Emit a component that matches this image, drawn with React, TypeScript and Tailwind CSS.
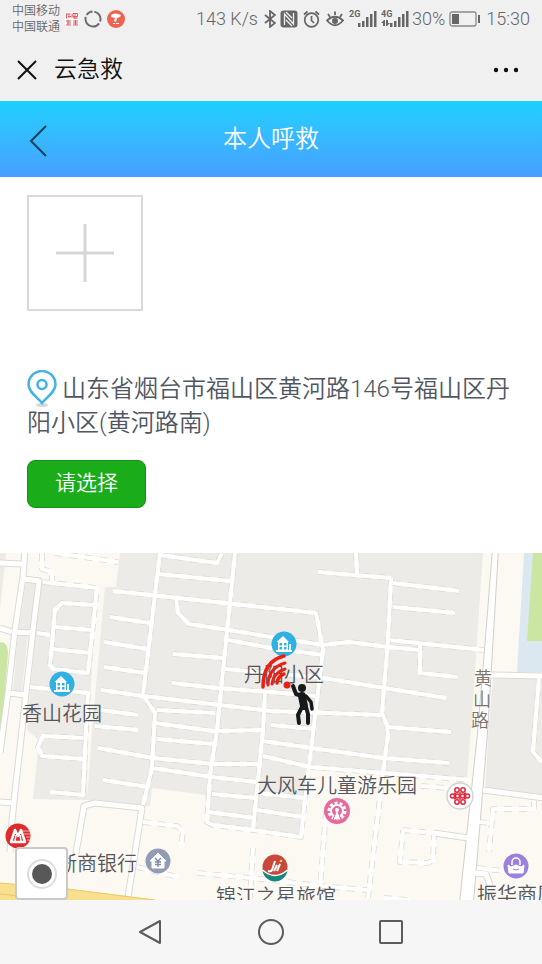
import type { ReactNode } from "react";

const blocks = [
  "0,0 6,0 0,57",
  "42,30 97,35 88,177 87,247 33,246 39,187 27,177 30,140 36,80 28,80 22,138 13,138 18,80 26,30",
  "120,0 211,0 483,0 471,177 467,225 383,221 310,217 301,285 271,280 207,271 205,242 152,235 150,253 87,247 92,177 105,34 116,34",
  "493,124 542,125 542,242 485,237 489,172",
];

// small lanes, drawn white over a dashed edge
const lanes = [
  "160,0 143,142 155,160 154,177 152,215 143,252",
  "235,0 217,177 210,222 207,269 213,272 253,277 301,284 304,255 314,172 323,97 316,60 271,55 113,38",
  "265,140 263,177 253,277",
  "391,25 388,87 382,160 387,172 388,182 383,219 368,345",
  "318,19 391,25",
  "356,0 357,21",
  "393,30 459,38",
  "393,54 455,60",
  "389,87 484,97",
  "176,45 178,60 189,71 229,77 271,84 323,92 349,89 388,94 419,97",
  "420,90 420,120 457,124",
  "228,87 271,95 323,102",
  "173,101 223,105",
  "172,130 217,135 271,139 316,143",
  "225,116 271,120 323,125 446,145",
  "160,2 217,10 222,0",
  "158,21 230,28",
  "110,64 150,70",
  "104,89 148,96",
  "104,114 145,120",
  "101,137 143,143 271,158 382,162",
  "100,157 138,162",
  "95,173 138,177",
  "157,157 215,160",
  "155,170 213,178 263,177",
  "271,172 314,176",
  "157,186 213,191",
  "98,195 153,205 213,211 262,211",
  "152,215 212,224 257,229",
  "103,227 148,234",
  "212,241 257,245",
  "208,259 255,265",
  "263,203 310,214 471,227",
  "263,188 311,195 383,205 449,210",
  "388,174 451,179",
  "257,257 303,264",
  "257,240 305,245",
  "95,52 62,50 55,57 50,112 53,116 88,120 97,35 43,29",
  "55,74 92,77",
  "52,96 90,100",
  "37,80 50,82",
  "30,134 88,140 86,177 83,242 50,239",
  "83,185 43,183 38,194 42,203 83,206",
  "143,269 177,273 183,278 181,295",
  "137,314 178,324",
  "198,320 271,327 320,333 368,337",
  "253,295 250,345",
  "326,259 320,335",
  "403,277 434,280 433,307 428,310 400,309 403,277",
  "421,233 448,235",
  "477,315 504,318",
  "534,248 534,256 493,256 489,299",
  "479,269 491,270",
  "539,124 533,199 542,209",
  "55,0 118,9",
  "42,0 42,16 52,19 52,28",
  "384,345 410,347",
];

const roads = [
  "25,-4 23,24 15,77 8,140 3,177 0,200",
  "24,26 39,28 33,77 26,140 22,177 15,239 12,268 10,299",
  "13,79 33,80",
  "9,140 26,142",
  "0,249 15,250",
  "0,10 22,11",
  "0,75 12,79",
  "76,300 84,253 95,250 142,255 135,300 127,350",
  "434,280 468,285",
  "483,237 545,245",
  "490,122 545,123",
  "475,320 486,321 490,332",
];

const labels = [
  { text: "香山花园", x: 22, y: 168 },
  { text: "丹阳小区", x: 244, y: 129 },
  { text: "大风车儿童游乐园", x: 257, y: 240 },
  { text: "浙商银行", x: 57, y: 318 },
  { text: "锦江之星旅馆", x: 216, y: 351 },
  { text: "振华商厦", x: 477, y: 349 },
];

function House({ x, y }: { x: number; y: number }) {
  return (
    <g transform={`translate(${x} ${y})`}>
      <circle r="12.500" fill="#2fb1e3" />
      <path d="M-7.500 -2L-1 -8L5 -2H4V6H-6V-2Z" fill="#fff" />
      <path d="M5 0H7V6H8V8H-8V6H5Z" fill="#fff" />
      <path d="M-4.500 -1h2.500v2.500h-2.500zM0 -1h2.500v2.500h-2.500zM-4.500 3h2.500v2.500h-2.500zM0 3h2.500v2.500h-2.500z" fill="#2fb1e3" />
    </g>
  );
}

function MapView() {
  return (
    <svg viewBox="0 0 542 347" preserveAspectRatio="xMinYMin slice" className="block w-full h-full" role="img" aria-label="地图">
      <rect width="542" height="347" fill="#fcf9f2" />
      {blocks.map((p) => (
        <polygon key={p} points={p} fill="#ecebe8" />
      ))}
      <path d="M0 89Q8 89 8 100L2 177L0 190Z" fill="#cbe6a3" />
      <polygon points="524,0 542,0 542,119 517,119" fill="#dbe8ef" />
      <polygon points="533,0 542,0 542,88 527,88" fill="#cbe6a3" />

      <g fill="none" strokeLinejoin="round">
        {lanes.map((p) => (
          <polyline key={p} points={p} stroke="#dbd8d1" strokeWidth="5.500" strokeDasharray="8 7" />
        ))}
        {roads.map((p) => (
          <polyline key={p} points={p} stroke="#dddad3" strokeWidth="7" />
        ))}
        <polygon points="493,-4 498,-4 492,97 487,180 473,350 460,350 478,180 485,97" stroke="#d3cfc9" strokeWidth="2" />
        {lanes.map((p) => (
          <polyline key={p} points={p} stroke="#fff" strokeWidth="4" />
        ))}
        {roads.map((p) => (
          <polyline key={p} points={p} stroke="#fff" strokeWidth="5" />
        ))}
        <polygon points="493,-4 498,-4 492,97 487,180 473,350 460,350 478,180 485,97" fill="#fff" />
      </g>

      <path d="M0 330L60 335L155 347H0Z" fill="#f8e08f" />
      <path d="M0 330L60 335L155 347M0 341L60 347" fill="none" stroke="#e6c867" />

      <House x={62} y={131} />
      <House x={284} y={91} />

      <g fontSize="20" fill="#53565c">
        {labels.map((l) => (
          <text key={l.text} x={l.x} y={l.y}>
            {l.text}
          </text>
        ))}
      </g>
      <g fontSize="18" fill="#7d736a" textAnchor="middle">
        <text x="483" y="132">黄</text>
        <text x="482" y="153">山</text>
        <text x="480" y="174">路</text>
      </g>

      {/* playground */}
      <g transform="translate(337 258)">
        <circle r="13" fill="#e8699b" />
        <circle r="8" fill="none" stroke="#fff" strokeWidth="3" strokeDasharray="3 2" />
        <circle r="6" fill="none" stroke="#fff" strokeWidth="2" />
        <path d="M0 -2L4 9H-4Z" fill="#fff" stroke="#e8699b" />
        <circle r="2" cy="-1" fill="#fff" />
      </g>

      {/* China Unicom */}
      <g transform="translate(460 243)" fill="none" stroke="#e0263c" strokeWidth="1.500">
        <circle r="13" fill="#fff" stroke="#d4d4d8" />
        <circle cx="-3" cy="-6" r="2.200" />
        <circle cx="3" cy="-6" r="2.200" />
        <circle cx="-7.500" cy="0" r="2" />
        <circle cx="-2.500" cy="0" r="2" />
        <circle cx="2.500" cy="0" r="2" />
        <circle cx="7.500" cy="0" r="2" />
        <path d="M-6 -3L-4 -2M6 -3L4 -2M-6 3L-4 2M6 3L4 2M0 -4V-2M0 2V4" />
        <circle cx="-3" cy="6" r="2.200" />
        <circle cx="3" cy="6" r="2.200" />
      </g>

      {/* China Merchants Bank */}
      <g transform="translate(18 283)">
        <circle r="12.500" fill="#df2b2b" />
        <path d="M-7 6L-3 -6L0 0L3 -6L7 6Z" fill="#df2b2b" stroke="#fff" strokeWidth="2.500" strokeLinejoin="round" />
        <path d="M-3 5L-2 -1M3 5L2 -1" fill="none" stroke="#fff" strokeWidth="1.500" />
        <path d="M5 -5H11M6 -2H12M8 1H12M9 4H12" stroke="#fff" strokeOpacity="0.6" />
      </g>

      {/* bank */}
      <g transform="translate(158 308)" fill="none">
        <circle r="12.500" fill="#929db5" />
        <path d="M-8 0L0 -8L8 0H6V7H-6V0Z" fill="#fff" stroke="#fff" strokeLinejoin="round" />
        <path d="M-3 -3L0 0L3 -3M0 0V6M-3 1H3M-3 3.500H3" stroke="#7e8aa3" strokeWidth="1.300" />
      </g>

      {/* Jinjiang Inn */}
      <g transform="translate(275 314)">
        <circle r="12.500" fill="#c8493a" />
        <path d="M-12.500 2Q0 14 12.500 2A12.500 12.500 0 0 1 -12.500 2Z" fill="#17877d" />
        <path d="M-12.500 3Q0 14 12.500 3" fill="none" stroke="#fff" strokeWidth="1.500" />
        <path d="M0 -6L-3 3Q-4 5 -7 4M5 -3L2 4M-1 4L2 -2" fill="none" stroke="#fff" strokeWidth="2" />
        <circle cx="6" cy="-6" r="1.300" fill="#f5d26b" />
      </g>

      {/* mall */}
      <g transform="translate(516 313)">
        <circle r="12.500" fill="#9c80db" />
        <path d="M-8 -1L-5 1L0 -1L5 1L8 -1L7 7H-7Z" fill="#fff" stroke="#fff" strokeLinejoin="round" />
        <path d="M-4 -1V-4A4 4 0 0 1 4 -4V-1" fill="none" stroke="#fff" strokeWidth="1.500" />
        <path d="M-3 3Q0 5 3 3" fill="none" stroke="#9c80db" />
      </g>

      {/* caller */}
      <g fill="none" strokeLinecap="round" strokeLinejoin="round">
        <g stroke="#ea2014" strokeWidth="3.500">
          <path d="M263 134Q263 108 284 103" />
          <path d="M268 132Q268 115 285 110" strokeWidth="3" />
          <path d="M272 131Q273 120 285 116" strokeWidth="3" />
          <path d="M277 130Q278 123 284 121" />
        </g>
        <circle cx="287" cy="132" r="3.500" fill="#ea2014" />
        <g stroke="#17191b">
          <path d="M293 133L296 141L302 143" strokeWidth="4" />
          <path d="M302 143L304 153" strokeWidth="8" />
          <path d="M306 143L311 149L312 156" strokeWidth="3.500" />
          <path d="M302 154L298 162L299 170M306 154L308 161L308 170" strokeWidth="4" />
        </g>
        <circle cx="302" cy="135" r="4" fill="#17191b" />
      </g>
    </svg>
  );
}

function Signal({ label, data }: { label: string; data?: boolean }) {
  return (
    <svg width="28" height="20" viewBox="0 0 28 20" fill="#666" aria-hidden="true">
      <text x="0" y="8" fontSize="9" fontWeight="700" fontFamily="Roboto, sans-serif">
        {label}
      </text>
      {data && <path d="M3 11L0 14H2V17H4V11ZM5 11H7V14H9L6 17H5Z" />}
      <path d="M9 14h2.500v4h-2.500zM13 12h2.500v6h-2.500zM17 8h2.500v10h-2.500zM21 5h2.500v13h-2.500zM25 2h2.500v16h-2.500z" />
    </svg>
  );
}

function StatusBar() {
  return (
    <div className="flex h-[38px] items-center justify-between px-3 text-[#666]">
      <div className="flex items-center gap-[5px]">
        <div className="text-xs leading-4">
          <p>中国移动</p>
          <p>中国联通</p>
        </div>
        <svg width="14" height="14" viewBox="0 0 14 14" fill="none" stroke="#e4575c" strokeWidth="1" aria-hidden="true">
          <rect width="14" height="14" rx="2" fill="#fff" stroke="none" />
          <path d="M1.500 1.500v5M4 2v4M1.500 2h4M3 4.500h3M8 1.500h4.500v3H8zM8 6h5M10 2v5M7 2v4M1 9h5M2 11h4M1 13h5M3 8v5M8 9h5M8 11h5M8 13h5M10.500 8v5" />
        </svg>
        <svg width="18" height="18" viewBox="0 0 18 18" fill="none" stroke="#6c6c6c" strokeWidth="2" aria-hidden="true">
          <circle cx="9" cy="9" r="7.500" strokeDasharray="13 2 21 2 7 2" transform="rotate(-80 9 9)" />
        </svg>
        <svg width="18" height="18" viewBox="0 0 18 18" aria-hidden="true">
          <circle cx="9" cy="9" r="9" fill="#ed6450" />
          <path d="M4 5Q8 2 14 5L13 7L10 8L9 12L7 11L8 8L4 7ZM6 13h2v1H6zM9 13h3v1H9z" fill="#fff" />
        </svg>
      </div>
      <div className="flex items-center text-lg leading-6">
        <span className="mr-[6px]">143 K/s</span>
        <svg width="12" height="18" viewBox="0 0 12 18" fill="none" stroke="#666" strokeWidth="1.800" className="mr-[4px]" aria-hidden="true">
          <path d="M1 5L11 13L6 17V1L11 5L1 13" />
        </svg>
        <svg width="18" height="18" viewBox="0 0 18 18" className="mr-[5px]" aria-hidden="true">
          <rect x="0.500" y="0.500" width="17" height="17" rx="3" fill="#666" />
          <path d="M4.500 15V4L13.500 14V3M6 2L12 8M6 10L12 16" fill="none" stroke="#f0f0f0" strokeWidth="1.300" />
        </svg>
        <svg width="17" height="18" viewBox="0 0 17 18" fill="none" stroke="#666" strokeWidth="1.700" className="mr-[6px]" aria-hidden="true">
          <circle cx="8.500" cy="10" r="6.800" />
          <path d="M8.500 6V10.500L11 13M1 4.500L4.500 1.500M16 4.500L12.500 1.500" />
        </svg>
        <svg width="18" height="18" viewBox="0 0 18 18" fill="none" stroke="#666" strokeWidth="1.800" className="mr-[5px]" aria-hidden="true">
          <path d="M1 10.500Q9 3 17 10.500Q9 20 1 10.500ZM2 4L4 7M9 1.500V5M16 4L14 7" />
          <circle cx="9" cy="11" r="3" fill="#666" stroke="none" />
        </svg>
        <Signal label="2G" />
        <span className="w-1" />
        <Signal label="4G" data />
        <span className="ml-[3px] mr-[4px]">30%</span>
        <svg width="32" height="16" viewBox="0 0 32 16" fill="none" stroke="#666" className="mr-[5px]" aria-hidden="true">
          <rect x="1" y="1" width="26" height="14" rx="2" stroke="#888" strokeWidth="1.300" />
          <rect x="3" y="3" width="7" height="10" fill="#666" stroke="none" />
          <path d="M30 4V12" strokeWidth="2" />
        </svg>
        <span>15:30</span>
      </div>
    </div>
  );
}

function NavButton({ label, children }: { label: string; children: ReactNode }) {
  return (
    <button type="button" aria-label={label} className="flex size-10 items-center justify-center">
      <svg width="26" height="26" viewBox="0 0 26 26" fill="none" stroke="#5c5c5c" strokeWidth="2" strokeLinejoin="round">
        {children}
      </svg>
    </button>
  );
}

export default function App() {
  return (
    <div className="flex min-h-screen flex-col bg-white font-[Roboto,'Noto_Sans_CJK_SC',sans-serif] font-[350]">
      <div className="bg-[#f0f0f0]">
        <StatusBar />
        <div className="flex h-[63px] items-center pl-[17px] pr-6">
          <button type="button" aria-label="关闭">
            <svg width="20" height="20" viewBox="0 0 20 20" stroke="#111" strokeWidth="2">
              <path d="M1 1L19 19M19 1L1 19" />
            </svg>
          </button>
          <span className="ml-[17px] text-[23px] leading-8 text-[#111]">云急救</span>
          <button type="button" aria-label="更多" className="ml-auto">
            <svg width="26" height="8" viewBox="0 0 26 8" fill="#111">
              <circle cx="4" cy="4" r="2.200" />
              <circle cx="14" cy="4" r="2.200" />
              <circle cx="24" cy="4" r="2.200" />
            </svg>
          </button>
        </div>
      </div>

      <header className="grid h-[76px] grid-cols-[1fr_auto_1fr] items-center bg-linear-to-b from-[#1bd0ff] to-[#469fff] px-[29px]">
        <button type="button" aria-label="返回" className="justify-self-start pt-1">
          <svg width="19" height="32" viewBox="0 0 19 32" fill="none" stroke="#17415a" strokeWidth="2">
            <path d="M17 1L2 16L17 31" />
          </svg>
        </button>
        <h1 className="text-2xl leading-8 font-[350] text-white">本人呼救</h1>
      </header>

      <main className="flex flex-1 flex-col">
        <section className="px-[27px] pt-[18px] pb-[45px]">
          <button type="button" aria-label="添加照片" className="flex size-[116px] items-center justify-center border-2 border-[#d9d9d9]">
            <svg width="60" height="60" viewBox="0 0 60 60" stroke="#d6d6d6" strokeWidth="3">
              <path d="M30 1V59M1 30H59" />
            </svg>
          </button>

          <p className="mt-[61px] text-2xl leading-[34px] text-[#505662]">
            <svg width="30" height="38" viewBox="0 0 30 38" fill="none" className="-mt-[10px] mr-[5px] -mb-[6px] inline-block align-middle" aria-hidden="true">
              <ellipse cx="15" cy="35" rx="6" ry="2" fill="#d5d9dc" />
              <path d="M15 33C10 27 1.500 22 1.500 14.500A13.500 13.500 0 0 1 28.500 14.500C28.500 22 20 27 15 33Z" fill="#fff" stroke="#42b1e6" strokeWidth="2.500" />
              <circle cx="15" cy="14.500" r="4.500" stroke="#42b1e6" strokeWidth="2.500" />
            </svg>
            山东省烟台市福山区黄河路146号福山区丹阳小区(黄河路南)
          </p>

          <button type="button" className="mt-5 block h-12 w-[119px] rounded-lg border border-[#178f17] bg-[#1aad19] pb-[2px] text-[21px] leading-8 text-white">
            请选择
          </button>
        </section>

        <section className="relative min-h-[347px] flex-1 overflow-hidden">
          <MapView />
          <button
            type="button"
            aria-label="定位"
            className="absolute bottom-0 left-[15px] flex size-[53px] items-center justify-center rounded border-2 border-[#c9c9c9] bg-white"
          >
            <svg width="32" height="32" viewBox="0 0 32 32">
              <circle cx="16" cy="16" r="14" fill="#fff" stroke="#ddd" strokeWidth="2" />
              <circle cx="16" cy="16" r="10" fill="#585858" />
            </svg>
          </button>
        </section>
      </main>

      <nav className="flex h-16 items-center justify-center gap-20 bg-[#f6f6f6]">
        <NavButton label="后退">
          <path d="M22 2V24L2 13Z" />
        </NavButton>
        <NavButton label="主页">
          <circle cx="13" cy="13" r="12" />
        </NavButton>
        <NavButton label="最近任务">
          <rect x="2" y="2" width="22" height="22" rx="1" />
        </NavButton>
      </nav>
    </div>
  );
}
